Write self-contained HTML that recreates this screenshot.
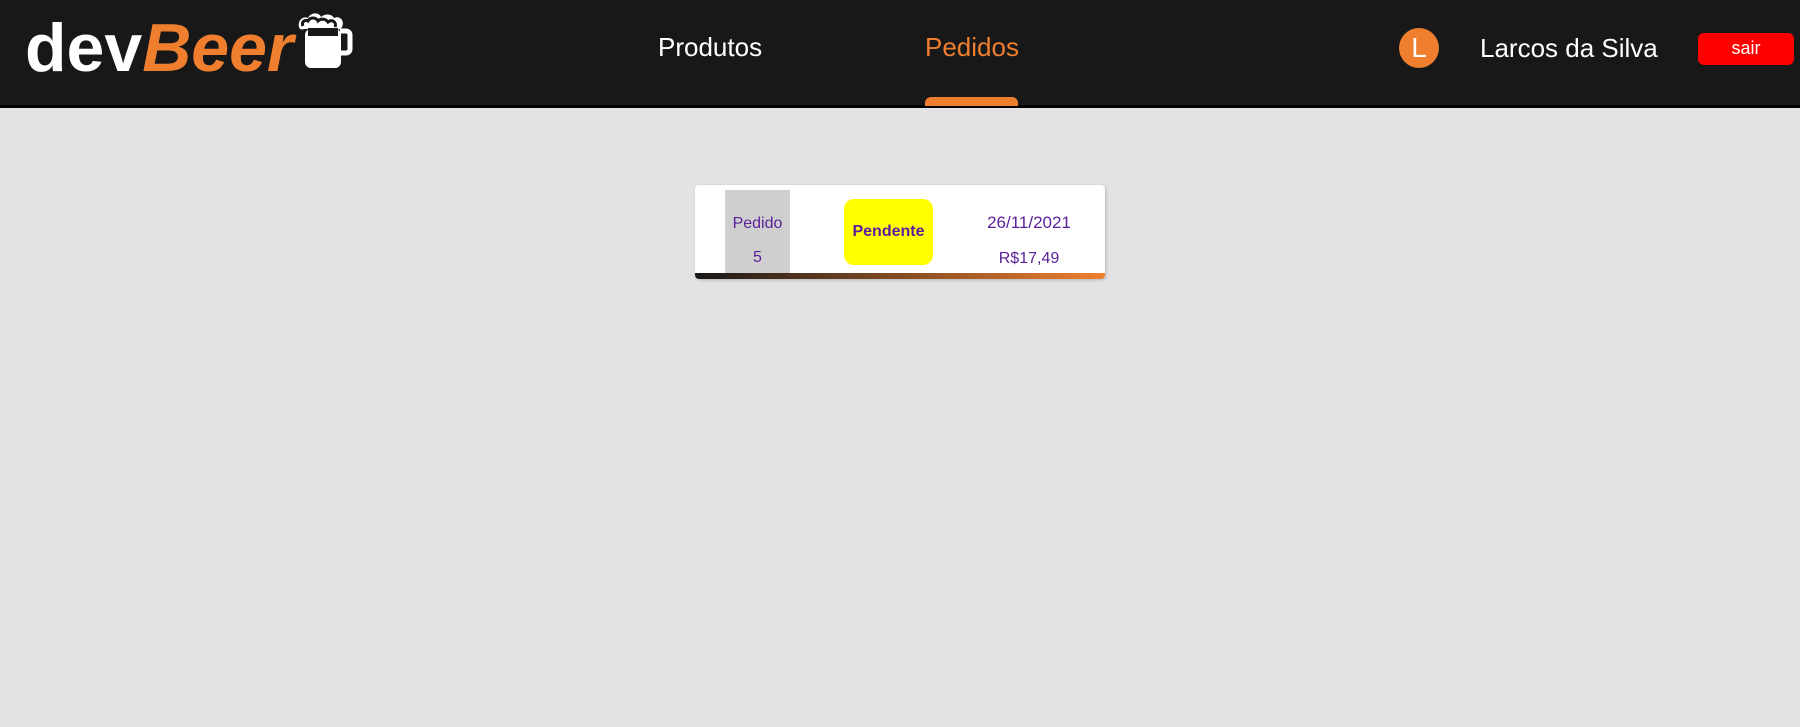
<!DOCTYPE html>
<html><head><meta charset="utf-8"><style>
*{margin:0;padding:0;box-sizing:border-box}
body{width:1800px;height:727px;background:#e3e3e3;font-family:"Liberation Sans",sans-serif;overflow:hidden;position:relative}
.hdr{position:absolute;left:0;top:0;width:1800px;height:108px;background:#181818;border-bottom:3px solid #000}
.logo{position:absolute;left:25px;top:8px;font-size:68px;font-weight:bold;color:#fff;letter-spacing:0px;line-height:80px}
.logo i{color:#ef7f2e}
.nav{position:absolute;top:30px;font-size:26px;line-height:34px}
.ul{position:absolute;left:925px;top:97px;width:93px;height:9px;background:#ef7f2e;border-radius:6px 6px 0 0}
.av{position:absolute;left:1399px;top:28px;width:40px;height:40px;border-radius:50%;background:#ef7f2e;color:#fff;font-size:28px;text-align:center;line-height:40px}
.sair{position:absolute;left:1698px;top:33px;width:96px;height:32px;background:#f00;border-radius:6px;color:#fff;font-size:18px;text-align:center;line-height:31px}
.card{position:absolute;left:695px;top:185px;width:410px;height:94px;background:#fff;border-radius:4px;box-shadow:1px 1px 3px rgba(0,0,0,.2);overflow:hidden}
.bar{position:absolute;left:0;bottom:0;width:100%;height:6px;background:linear-gradient(90deg,#181818,#ef7f2e)}
.pid{position:absolute;left:30px;top:5px;width:65px;height:83px;background:#cfcfcf;color:#5a1f9a;font-size:16px;text-align:center}
.pen{position:absolute;left:149px;top:14px;width:89px;height:66px;background:#ff0;border-radius:10px;color:#5a1f9a;font-weight:bold;font-size:16px;text-align:center;line-height:66px}
.pur{color:#5a1f9a;position:absolute;text-align:center}
</style></head><body>
<div class="hdr">
<div class="logo">dev<i>Beer</i></div>
<svg style="position:absolute;left:296px;top:11px" width="58" height="58" viewBox="0 0 58 58">
<path d="M44 20h6a4 4 0 0 1 4 4v14a4 4 0 0 1-4 4h-6" fill="none" stroke="#fff" stroke-width="5"/>
<rect x="9" y="18" width="36" height="39" rx="6" fill="#fff"/>
<path d="M4 18c-4-6 2-14 8-11 3-6 11-6 13-1 4-4 11-3 13 1 6-3 11 3 8 9-2 3-5 3-7 2H8c-2 1-3 0-4 0z" fill="#fff"/>
<path d="M7 15c-2-4 2-7 5-5 2-4 8-4 10 0 3-3 8-2 10 1 4-3 9 0 7 5" fill="none" stroke="#181818" stroke-width="3"/>
<rect x="12" y="17" width="30" height="8" fill="#181818"/>
</svg>
<div class="nav" style="left:658px;color:#fff">Produtos</div>
<div class="nav" style="left:925px;color:#ef7f2e">Pedidos</div>
<div class="ul"></div>
<div class="av">L</div>
<div class="nav" style="left:1480px;color:#fff;top:31px">Larcos da Silva</div>
<div class="sair">sair</div>
</div>
<div class="card">
<div class="pid"><div style="margin-top:25px">Pedido</div><div style="margin-top:16px">5</div></div>
<div class="pen">Pendente</div>
<div class="pur" style="left:280px;width:108px;top:28px;font-size:17px">26/11/2021</div>
<div class="pur" style="left:280px;width:108px;top:65px;font-size:16px">R$17,49</div>
<div class="bar"></div>
</div>
</body></html>
